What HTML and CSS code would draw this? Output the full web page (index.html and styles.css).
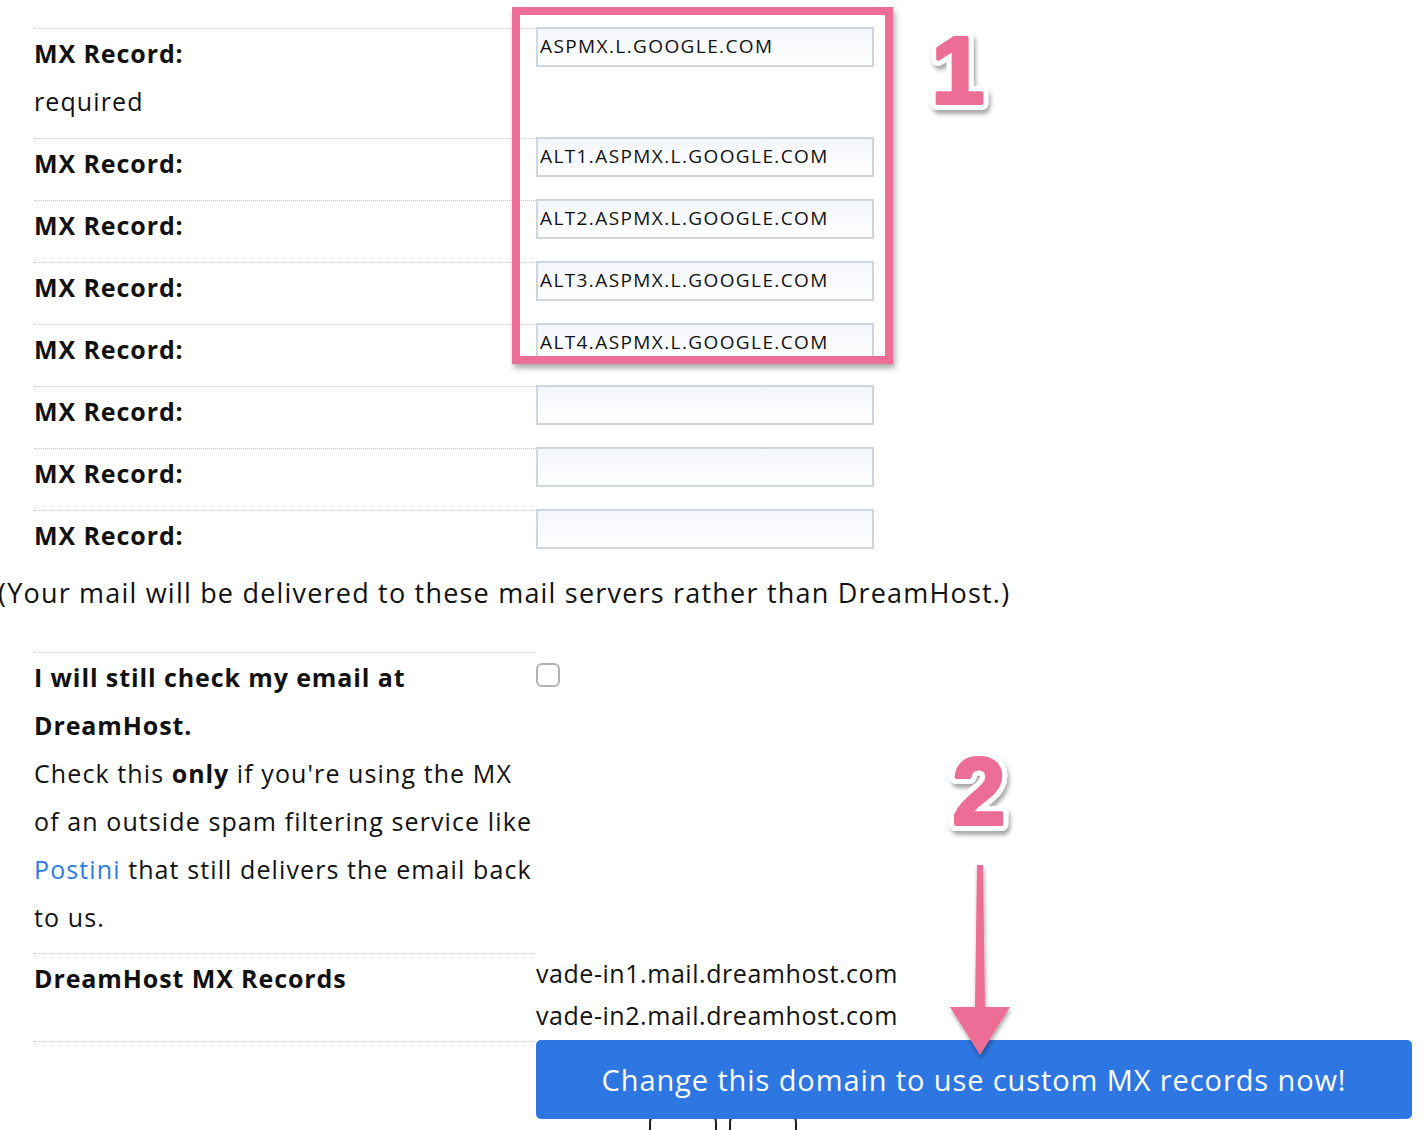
FILE: index.html
```html
<!DOCTYPE html>
<html>
<head>
<meta charset="utf-8">
<link rel="stylesheet" href="styles.css">
</head>
<body>
<div class="page">
  <div class="form">
    <div class="row row-first">
      <div class="label"><b>MX Record:</b><br>required</div>
      <div class="field"><div class="input">ASPMX.L.GOOGLE.COM</div></div>
    </div>
    <div class="row">
      <div class="label"><b>MX Record:</b></div>
      <div class="field"><div class="input">ALT1.ASPMX.L.GOOGLE.COM</div></div>
    </div>
    <div class="row">
      <div class="label"><b>MX Record:</b></div>
      <div class="field"><div class="input">ALT2.ASPMX.L.GOOGLE.COM</div></div>
    </div>
    <div class="row">
      <div class="label"><b>MX Record:</b></div>
      <div class="field"><div class="input">ALT3.ASPMX.L.GOOGLE.COM</div></div>
    </div>
    <div class="row">
      <div class="label"><b>MX Record:</b></div>
      <div class="field"><div class="input">ALT4.ASPMX.L.GOOGLE.COM</div></div>
    </div>
    <div class="row">
      <div class="label"><b>MX Record:</b></div>
      <div class="field"><div class="input"></div></div>
    </div>
    <div class="row">
      <div class="label"><b>MX Record:</b></div>
      <div class="field"><div class="input"></div></div>
    </div>
    <div class="row">
      <div class="label"><b>MX Record:</b></div>
      <div class="field"><div class="input"></div></div>
    </div>
  </div>

  <p class="note">(Your mail will be delivered to these mail servers rather than DreamHost.)</p>

  <div class="form">
    <div class="row row-check">
      <div class="label">
        <b>I will still check my email at DreamHost.</b><br>
        Check this <b>only</b> if you're using the MX of an outside spam filtering service like <a href="#">Postini</a> that still delivers the email back to us.
      </div>
      <div class="field"><span class="checkbox"></span></div>
    </div>
    <div class="row row-dh">
      <div class="label"><b>DreamHost MX Records</b></div>
      <div class="field values">vade-in1.mail.dreamhost.com<br>vade-in2.mail.dreamhost.com</div>
    </div>
    <div class="row row-submit">
      <div class="label"></div>
      <div class="field">
        <div class="button">Change this domain to use custom MX records now!</div>
        <div class="small-buttons"><span class="small"></span><span class="small"></span></div>
      </div>
    </div>
  </div>

  <div class="highlight"></div>
  <svg class="badge badge-1" width="90" height="110" viewBox="0 0 90 110">
    <defs><filter id="sh1" x="-30%" y="-30%" width="160%" height="160%"><feDropShadow dx="2" dy="4" stdDeviation="2" flood-color="#000" flood-opacity="0.35"/></filter></defs>
    <g filter="url(#sh1)">
      <text x="45" y="83" text-anchor="middle" class="num-out">1</text>
      <text x="45" y="83" text-anchor="middle" class="num-in">1</text>
    </g>
  </svg>
  <svg class="badge badge-2" width="100" height="110" viewBox="0 0 100 110">
    <defs><filter id="sh2" x="-30%" y="-30%" width="160%" height="160%"><feDropShadow dx="2" dy="4" stdDeviation="2" flood-color="#000" flood-opacity="0.35"/></filter></defs>
    <g filter="url(#sh2)">
      <text x="50" y="84" text-anchor="middle" class="num-out">2</text>
      <text x="50" y="84" text-anchor="middle" class="num-in">2</text>
    </g>
  </svg>
  <svg class="arrow" width="80" height="210" viewBox="0 0 80 210">
    <defs><filter id="sh3" x="-40%" y="-20%" width="180%" height="140%"><feDropShadow dx="1" dy="3" stdDeviation="2" flood-color="#000" flood-opacity="0.35"/></filter></defs>
    <path filter="url(#sh3)" fill="#ec6d95" d="M37 10 L43 10 L45 152 L70 152 L40 200 L10 152 L35 152 Z"/>
  </svg>
</div>
</body>
</html>
```
FILE: styles.css
```css
html, body {
  margin: 0;
  padding: 0;
  background: #fff;
}
body {
  font-family: "Open Sans", "Lato", sans-serif;
  color: #111;
  font-size: 25px;
}
.page {
  position: relative;
  width: 1426px;
  height: 1130px;
  overflow: hidden;
  padding-top: 28px;
  box-sizing: border-box;
}
.form {
  display: flex;
  flex-direction: column;
  padding-left: 34px;
}
.row {
  display: flex;
}
.label {
  width: 502px;
  box-sizing: border-box;
  border-top: 1px dotted #c9ccd2;
  line-height: 48px;
  padding-bottom: 13px;
  padding-right: 0;
  letter-spacing: 1.1px;
}
.label b {
  font-weight: 700;
  letter-spacing: 0.9px;
}
.field {
  flex: 1;
}
.input {
  width: 338px;
  height: 40px;
  box-sizing: border-box;
  border: 2px solid #cfd6de;
  background: linear-gradient(#f3f6fb, #ffffff);
  font-size: 19px;
  letter-spacing: 1.4px;
  line-height: 34px;
  padding-left: 2px;
  color: #111;
  margin-top: -1px;
}
.note {
  margin: 0 0 38px -2px;
  font-size: 27px;
  letter-spacing: 1.2px;
  line-height: 42px;
}
.row-check .label {
  padding-bottom: 12px;
}
.checkbox {
  display: block;
  width: 24px;
  height: 24px;
  box-sizing: border-box;
  border: 2px solid #b3b3b3;
  border-radius: 6px;
  margin-top: 11px;
  background: #fff;
}
a {
  color: #2f7be6;
  text-decoration: none;
}
.row-dh .label {
  height: 88px;
}
.values {
  line-height: 42px;
  letter-spacing: 0.55px;
  margin-top: -1px;
}
.row-submit .label {
  height: 89px;
}
.row-submit .field {
  position: relative;
}
.button {
  position: relative;
  z-index: 2;
  width: 876px;
  height: 79px;
  margin-top: -1px;
  background: #2e76e1;
  border-radius: 5px;
  color: #fff;
  font-size: 29px;
  letter-spacing: 0.9px;
  line-height: 79px;
  text-align: center;
}
.small-buttons {
  display: flex;
  gap: 12px;
  margin-left: 113px;
  margin-top: -5px;
}
.small {
  width: 68px;
  height: 40px;
  box-sizing: border-box;
  border: 2px solid #222;
  border-radius: 8px;
}
.highlight {
  position: absolute;
  left: 512px;
  top: 7px;
  width: 381px;
  height: 357px;
  box-sizing: border-box;
  border: 8px solid #ec6d95;
  box-shadow: 2px 4px 6px rgba(0, 0, 0, 0.35);
  z-index: 5;
}
.badge {
  position: absolute;
  z-index: 6;
}
.badge-1 {
  left: 913px;
  top: 20px;
}
.badge-2 {
  left: 929px;
  top: 740px;
}
.num-out {
  font-family: "Liberation Sans", Arial, sans-serif;
  font-weight: 700;
  font-size: 94px;
  fill: #fff;
  stroke: #fff;
  stroke-width: 14px;
  stroke-linejoin: round;
}
.num-in {
  font-family: "Liberation Sans", Arial, sans-serif;
  font-weight: 700;
  font-size: 94px;
  fill: #ec6d95;
  stroke: #ec6d95;
  stroke-width: 4px;
  stroke-linejoin: round;
}
.arrow {
  position: absolute;
  left: 940px;
  top: 855px;
  z-index: 6;
}
```
